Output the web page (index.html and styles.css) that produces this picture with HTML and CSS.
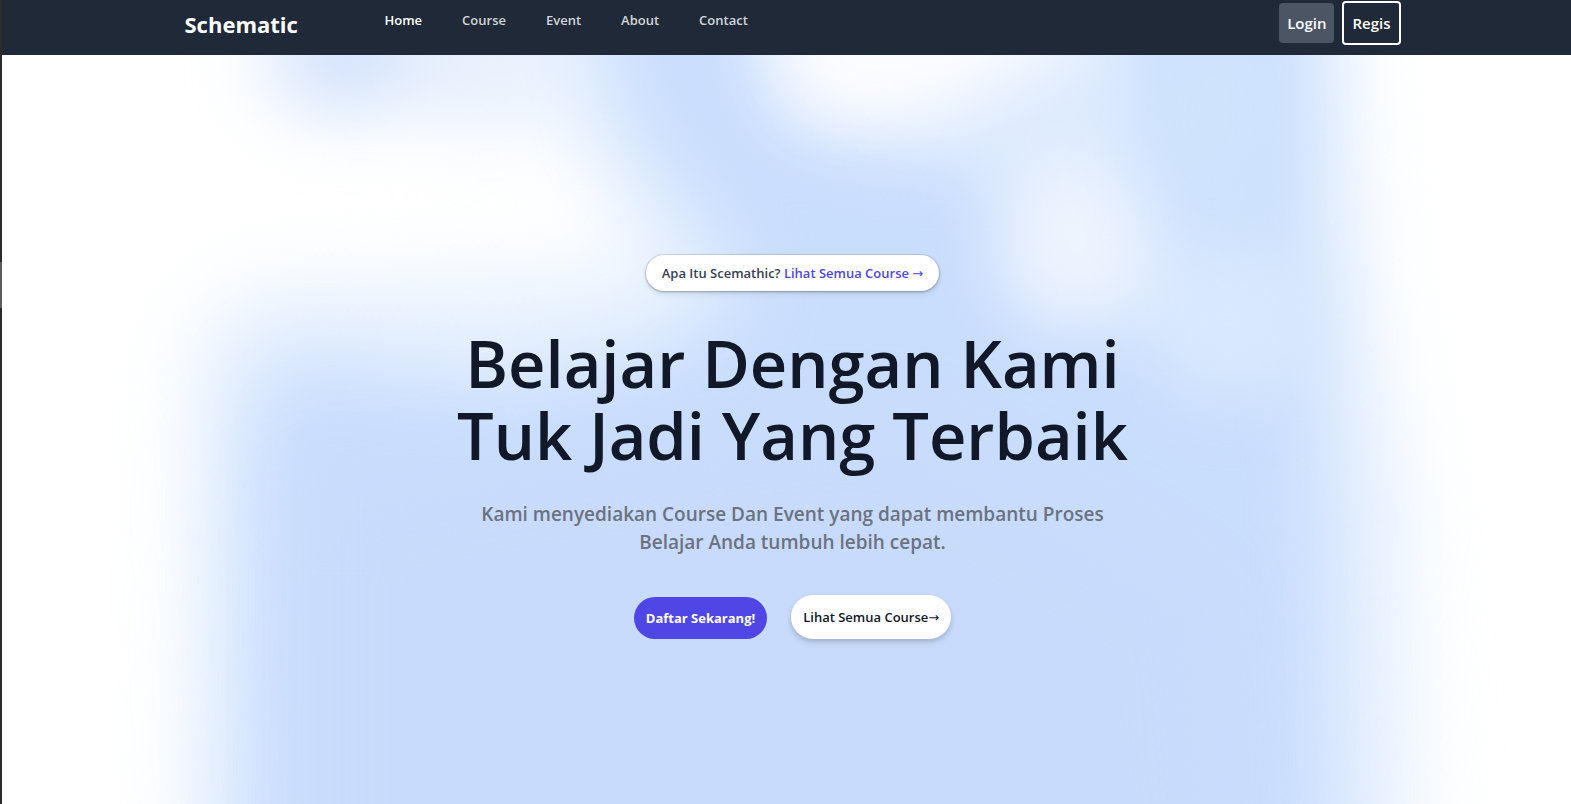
FILE: index.html
```html
<!DOCTYPE html>
<html lang="id">
<head>
<meta charset="utf-8">
<meta name="viewport" content="width=device-width, initial-scale=1">
<title>Schematic</title>
<link rel="stylesheet" href="styles.css">
</head>
<body>
<div class="page">
  <header class="header">
    <div class="container header-row">
      <a class="brand" href="#">Schematic</a>
      <nav class="nav">
        <a class="nav-link active" href="#">Home</a>
        <a class="nav-link" href="#">Course</a>
        <a class="nav-link" href="#">Event</a>
        <a class="nav-link" href="#">About</a>
        <a class="nav-link" href="#">Contact</a>
      </nav>
      <div class="auth">
        <button class="auth-button login" type="button">Login</button>
        <button class="auth-button register" type="button">Regis</button>
      </div>
    </div>
  </header>
  <main class="hero">
    <svg class="backdrop" viewBox="0 55 1571 749" preserveAspectRatio="none" aria-hidden="true">
      <defs>
        <filter id="soft" color-interpolation-filters="sRGB" filterUnits="userSpaceOnUse" x="-200" y="-200" width="1971" height="1400"><feGaussianBlur stdDeviation="38"/></filter>
        <filter id="glow" color-interpolation-filters="sRGB" filterUnits="userSpaceOnUse" x="-200" y="-200" width="1971" height="1400"><feGaussianBlur stdDeviation="34"/></filter>
      </defs>
      <g filter="url(#soft)">
        <path fill="#e8f2fe" d="M185 1100 L190 340 L250 285 L640 265 L600 180 L530 100 L530 -60 L1340 -60 L1370 300 L1410 500 L1420 1100 Z"/>
        <ellipse fill="#d2e2fb" cx="345" cy="55" rx="80" ry="60"/>
        <ellipse fill="#e8f0fd" cx="475" cy="60" rx="60" ry="80"/>
      </g>
      <g filter="url(#soft)">
        <path fill="#c9ddfd" d="M240 1100 L243 420 L280 355 L500 385 L660 350 L740 290 L680 200 L620 120 L580 -60 L740 -60 L780 120 L930 150 L1120 140 L1130 -60 L1300 -60 L1310 300 L1330 500 L1340 1100 Z"/>
      </g>
      <g filter="url(#glow)">
        <path fill="#fcfcff" d="M755 -30 L1080 -30 L1020 75 L900 122 L800 115 Z"/>
        <path fill="#dceafd" d="M950 110 L1120 60 L1130 180 L980 190 Z"/>
        <ellipse fill="#eef4fe" cx="1075" cy="245" rx="80" ry="85"/>
        <ellipse fill="#d9e9fd" cx="1230" cy="320" rx="90" ry="80"/>
        <ellipse fill="#cfe3fd" cx="1215" cy="110" rx="70" ry="120"/>
      </g>
      <path fill="#c8dbfc" filter="url(#soft)" d="M310 1100 L310 500 L600 450 L900 430 L1200 600 L1240 1100 Z"/>
    </svg>
    <div class="container hero-content">
      <p class="pill">Apa Itu Scemathic? <a class="pill-link" href="#">Lihat Semua Course <span class="arrow">→</span></a></p>
      <h1 class="title">Belajar Dengan Kami<br>Tuk Jadi Yang Terbaik</h1>
      <p class="lead">Kami menyediakan Course Dan Event yang dapat membantu Proses Belajar Anda tumbuh lebih cepat.</p>
      <div class="actions">
        <a class="cta primary" href="#">Daftar Sekarang!</a>
        <a class="cta secondary" href="#">Lihat Semua Course<span class="arrow">→</span></a>
      </div>
    </div>
  </main>
</div>
</body>
</html>
```
FILE: styles.css
```css
* { box-sizing: border-box; }

body {
  margin: 0;
  font-family: "Open Sans", "Noto Sans", sans-serif;
  font-weight: 600;
  color: #111827;
  background: #fff;
}

a { color: inherit; text-decoration: none; }

.page {
  display: flex;
  flex-direction: column;
  min-height: 100vh;
  padding-left: 2px;
  background: linear-gradient(#2b2b2b 262px, #5a5a5a 262px 308px, #2b2b2b 308px);
}

.header {
  padding: 1px 0 10px 12px;
  background: #1f2937;
}

.container {
  width: 100%;
  max-width: 1280px;
  margin: 0 auto;
  padding: 0 32px;
}

.header-row { display: flex; align-items: flex-start; }

.brand {
  width: 200px;
  padding-top: 7px;
  font-size: 22px;
  line-height: 32px;
  font-weight: 700;
  color: #fff;
}

.nav { display: flex; gap: 40px; padding-top: 9px; }

.nav-link {
  font-size: 13px;
  line-height: 20px;
  color: #d1d5db;
}

.nav-link.active { color: #fff; }

.auth {
  display: flex;
  align-items: center;
  gap: 8px;
  margin-left: auto;
}

.auth-button {
  padding: 8px;
  border: 0;
  border-radius: 4px;
  font: inherit;
  font-size: 15px;
  line-height: 24px;
  color: #fff;
  background: #4b5563;
}

.register { border: 2px solid #fff; background: #1f2937; }

.hero {
  position: relative;
  flex: 1;
  padding-left: 12px;
  overflow: hidden;
  background: #fff;
}

.backdrop {
  position: absolute;
  inset: 0;
  width: 100%;
  height: 100%;
}

.hero-content {
  position: relative;
  display: flex;
  flex-direction: column;
  align-items: center;
  padding-top: 200px;
  text-align: center;
}

.pill {
  margin: 0 0 36px;
  padding: 8px 16px;
  border-radius: 18px;
  font-size: 13px;
  line-height: 20px;
  color: #374151;
  background: #fff;
  box-shadow: 0 0 0 1px rgba(17, 24, 39, 0.1), 0 1px 3px rgba(0, 0, 0, 0.25), 0 4px 6px rgba(0, 0, 0, 0.06);
}

.pill-link { color: #4f46e5; }

.arrow { font-family: "DejaVu Sans", sans-serif; font-weight: 400; line-height: 1; }

.title {
  margin: 0;
  font-size: 65px;
  line-height: 72px;
  font-weight: 600;
}

.lead {
  max-width: 672px;
  margin: 29px 0 0;
  font-size: 19px;
  line-height: 28px;
  color: #6b7280;
}

.actions {
  display: flex;
  align-items: flex-end;
  gap: 24px;
  margin-top: 39px;
}

.cta {
  padding: 11px 12px;
  border-radius: 22px;
  font-size: 13px;
  line-height: 20px;
}

.primary { color: #fff; background: #4f46e5; font-weight: 700; }

.secondary {
  padding: 12px;
  background: #fff;
  box-shadow: 0 4px 6px rgba(0, 0, 0, 0.1), 0 2px 4px rgba(0, 0, 0, 0.1);
}
```
